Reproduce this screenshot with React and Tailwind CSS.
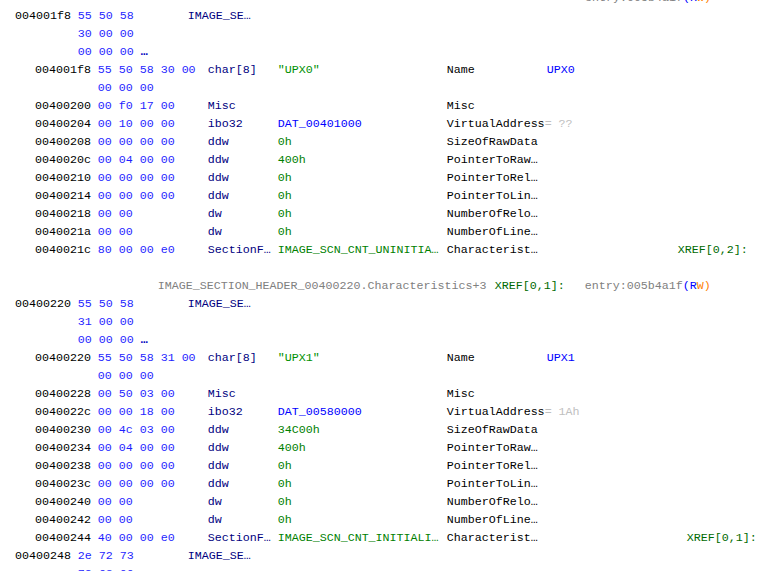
const BYTE = "text-[#1f1fff]";
const MNEM = "text-[#000080]";
const GREEN = "text-[#008000]";
const BLUE = "text-[#0000ff]";
const GRAY = "text-[#808080]";

const Row = ({ indent = 15, children }) => (
  <div
    className={`flex h-[18px] shrink-0 items-center whitespace-pre leading-[18px] ${
      indent === 35 ? "pl-[35px]" : indent === 15 ? "pl-[15px]" : "pl-0"
    }`}
  >
    {children}
  </div>
);

const Addr = ({ children }) => (
  <span className="w-[62.7px] shrink-0 text-black">{children}</span>
);

const Bytes = ({ children }) => (
  <span className={`w-[110px] shrink-0 ${BYTE}`}>{children}</span>
);

const Mnem = ({ children }) => (
  <span className={`w-[70px] shrink-0 ${MNEM}`}>{children}</span>
);

const Op = ({ children, color = GREEN }) => (
  <span className={`w-[169px] shrink-0 ${color}`}>{children}</span>
);

const Name = ({ children }) => (
  <span className="w-[100px] shrink-0 text-black">{children}</span>
);

const Entry = () => (
  <span>
    <span className={GRAY}>entry:005b4a1f</span>
    <span className={BLUE}>(R</span>
    <span className="text-[#ff8000]">W)</span>
  </span>
);

const OuterHead = ({ addr, bytes }) => (
  <Row indent={15}>
    <Addr>{addr}</Addr>
    <span className={`w-[110px] shrink-0 ${BYTE}`}>{bytes}</span>
    <span className={MNEM}>IMAGE_SE…</span>
  </Row>
);

const OuterCont = ({ bytes, more }) => (
  <Row indent={15}>
    <span className="w-[62.7px] shrink-0" />
    <span className={BYTE}>
      {bytes}
      {more && <span className="font-bold text-[#0000c0]"> …</span>}
    </span>
  </Row>
);

const NestedCont = ({ bytes }) => (
  <Row indent={35}>
    <span className="w-[62.7px] shrink-0" />
    <span className={BYTE}>{bytes}</span>
  </Row>
);

const Field = ({ addr, bytes, mnem, op, opColor, name, value, eq, xref, xrefPad }) => (
  <Row indent={35}>
    <Addr>{addr}</Addr>
    <Bytes>{bytes}</Bytes>
    <Mnem>{mnem}</Mnem>
    <Op color={opColor}>{op}</Op>
    <Name>
      {name}
      {eq && <span className="text-[#c0c0c0]">{eq}</span>}
    </Name>
    {value && <span className={BLUE}>{value}</span>}
    {xref && (
      <>
        <span className={xrefPad} />
        <span className="text-[#006a00]">{xref}</span>
      </>
    )}
  </Row>
);

const sectionFields = (s) => [
  { addr: s.a[0], bytes: "00 " + s.misc + " 00", mnem: "Misc", op: "", name: "Misc" },
  { addr: s.a[1], bytes: s.va, mnem: "ibo32", op: s.dat, opColor: BLUE, name: "VirtualAddress", eq: s.eq },
  { addr: s.a[2], bytes: s.raw, mnem: "ddw", op: s.rawOp, name: "SizeOfRawData" },
  { addr: s.a[3], bytes: "00 04 00 00", mnem: "ddw", op: "400h", name: "PointerToRaw…" },
  { addr: s.a[4], bytes: "00 00 00 00", mnem: "ddw", op: "0h", name: "PointerToRel…" },
  { addr: s.a[5], bytes: "00 00 00 00", mnem: "ddw", op: "0h", name: "PointerToLin…" },
  { addr: s.a[6], bytes: "00 00", mnem: "dw", op: "0h", name: "NumberOfRelo…" },
  { addr: s.a[7], bytes: "00 00", mnem: "dw", op: "0h", name: "NumberOfLine…" },
  {
    addr: s.a[8],
    bytes: s.ch,
    mnem: "SectionF…",
    op: s.chOp,
    name: "Characterist…",
    xref: s.xref,
    xrefPad: s.xrefPad,
  },
];

const upx0 = {
  a: ["00400200", "00400204", "00400208", "0040020c", "00400210", "00400214", "00400218", "0040021a", "0040021c"],
  misc: "f0 17",
  va: "00 10 00 00",
  dat: "DAT_00401000",
  eq: "= ??",
  raw: "00 00 00 00",
  rawOp: "0h",
  ch: "80 00 00 e0",
  chOp: "IMAGE_SCN_CNT_UNINITIA…",
  xref: "XREF[0,2]:",
  xrefPad: "w-[131px] shrink-0",
};

const upx1 = {
  a: ["00400228", "0040022c", "00400230", "00400234", "00400238", "0040023c", "00400240", "00400242", "00400244"],
  misc: "50 03",
  va: "00 00 18 00",
  dat: "DAT_00580000",
  eq: "= 1Ah",
  raw: "00 4c 03 00",
  rawOp: "34C00h",
  ch: "40 00 00 e0",
  chOp: "IMAGE_SCN_CNT_INITIALI…",
  xref: "XREF[0,1]:",
  xrefPad: "w-[140px] shrink-0",
};

const Section = ({ addr, bytes, num, data }) => (
  <>
    <OuterHead addr={addr} bytes={bytes} />
    <OuterCont bytes={`3${num} 00 00`} />
    <OuterCont bytes="00 00 00" more />
    <Field
      addr={addr}
      bytes={`${bytes} 3${num} 00`}
      mnem="char[8]"
      op={`"UPX${num}"`}
      opColor="text-[#009000]"
      name="Name"
      value={`UPX${num}`}
    />
    <NestedCont bytes="00 00 00" />
    {sectionFields(data).map((f) => (
      <Field key={f.addr} {...f} />
    ))}
  </>
);

export default function App() {
  return (
    <div className="h-[571px] w-[759px] overflow-hidden bg-white font-['Liberation_Mono',monospace] text-[11.67px]">
      <div className="-mt-[11px] flex flex-col">
        <Row indent={0}>
          <span className="w-[585px] shrink-0" />
          <Entry />
        </Row>
        <Section addr="004001f8" bytes="55 50 58" num="0" data={upx0} />
        <Row indent={0} />
        <Row indent={0}>
          <span className="w-[157.7px] shrink-0" />
          <span className={GRAY}>IMAGE_SECTION_HEADER_00400220.Characteristics+3</span>
          <span className="w-[8.3px] shrink-0" />
          <span className="w-[90px] shrink-0 text-[#006a00]">XREF[0,1]:</span>
          <Entry />
        </Row>
        <Section addr="00400220" bytes="55 50 58" num="1" data={upx1} />
        <OuterHead addr="00400248" bytes="2e 72 73" />
        <OuterCont bytes="72 63 00" />
      </div>
    </div>
  );
}
